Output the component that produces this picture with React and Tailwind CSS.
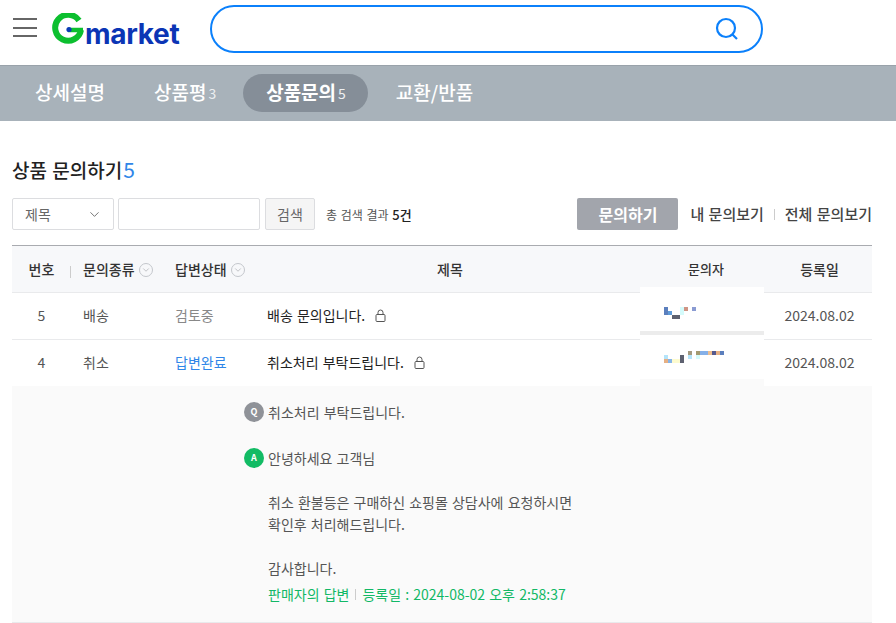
import { ChevronDown } from 'lucide-react';

const FONT = '"Noto Sans CJK KR", "Noto Sans", sans-serif';

// mosaic blocks that hide the author's name, [x, y, w, h, colour]
const MOSAIC_ONE = [
  [0, 0, 4, 8, '#5b7fbd'], [4, 4, 4, 4, '#5f9bd8'], [8, 8, 8, 4, '#5d6170'],
  [16, 0, 4, 8, '#d5fbfb'], [20, 0, 4, 4, '#cf9484'], [28, 0, 4, 4, '#8a9bd2'],
];
const MOSAIC_TWO = [
  [0, 4, 4, 4, '#b4e4fa'], [0, 8, 4, 4, '#e6b084'], [4, 8, 4, 4, '#85b4e8'], [8, 8, 8, 4, '#fdfbcf'],
  [16, 4, 4, 8, '#5d6170'], [24, 0, 4, 4, '#a49a80'], [24, 4, 4, 4, '#b4e4fa'], [32, 0, 4, 4, '#a49a70'],
  [32, 4, 4, 4, '#d5fbfb'], [36, 0, 8, 4, '#85b0e8'], [44, 0, 4, 4, '#efbe8e'], [48, 0, 4, 4, '#55598f'],
  [52, 0, 4, 4, '#e6b084'], [56, 0, 4, 4, '#5b7fbd'],
];

function Mosaic({ blocks }) {
  return (
    <svg width="60" height="12" viewBox="0 0 60 12" shapeRendering="crispEdges" className="block">
      {blocks.map(([x, y, w, h, c], i) => (
        <rect key={i} x={x} y={y} width={w} height={h} fill={c} />
      ))}
    </svg>
  );
}

function Logo() {
  return (
    <div className="flex items-end ml-[15px] h-[34px] w-[130px] mb-[8px]">
      <svg width="33" height="33" viewBox="0 0 33 33" className="shrink-0">
        <path d="M27 7.5A13 13 0 1 0 29 17" fill="none" stroke="#0cbf2f" strokeWidth="6" />
        <path d="M16 17H31" fill="none" stroke="#0cbf2f" strokeWidth="4.5" />
        <circle cx="17" cy="16.5" r="2.6" fill="#0b3bb5" />
      </svg>
      <span className="text-[#0b35b5] text-[28px] leading-[26px] font-bold tracking-[-0.3px] mb-[-1px] font-['Inter']">market</span>
    </div>
  );
}

function Tab({ label, count, active, className }) {
  return (
    <div className={`flex items-center h-[38px] rounded-full text-white ${active ? 'bg-[#858e98] font-bold pl-[23px] pr-[22px]' : 'font-medium'} ${className}`}>
      <span className="text-[19px]">{label}</span>
      {count && <span className="text-[14px] font-normal ml-[2px] mt-[2px] text-[#eef0f2]">{count}</span>}
    </div>
  );
}

function SortIcon() {
  return (
    <span className="inline-flex items-center justify-center w-[14px] h-[14px] rounded-full border border-[#c4c7cc] ml-[4px] mt-[1px]">
      <ChevronDown size={10} strokeWidth={1.2} color="#8a8d93" />
    </span>
  );
}

function LockIcon() {
  return (
    <svg width="11" height="13" viewBox="0 0 11 13" fill="none" stroke="#555" strokeWidth="1" className="ml-[10px]">
      <path d="M3 5.5V3.5a2.5 2.5 0 0 1 5 0v2" />
      <rect x="1" y="5.5" width="9" height="7" rx="1" />
    </svg>
  );
}

function Row({ num, type, status, statusColor, title, mosaic, maskClass }) {
  return (
    <div className="relative flex items-center h-[47px] pb-[2px] border-t border-[#e9eaec] text-[14px] text-[#555]">
      <div className="w-[59px] text-center">{num}</div>
      <div className="w-[92px] pl-[12px]">{type}</div>
      <div className={`w-[92px] pl-[12px] ${statusColor}`}>{status}</div>
      <div className="w-[390px] pl-[12px] flex items-center text-[#222]">
        <span>{title}</span>
        <LockIcon />
      </div>
      <div className="w-[122px]" />
      <div className="w-[105px] text-center text-[#555]">2024.08.02</div>
      <div className={`absolute left-[628px] w-[124px] bg-white pl-[24px] ${maskClass}`}>
        <Mosaic blocks={mosaic} />
      </div>
    </div>
  );
}

export default function App() {
  return (
    <div className="w-[896px] h-[623px] overflow-hidden bg-white [word-spacing:1px]" style={{ fontFamily: FONT }}>
      {/* top bar */}
      <header className="flex items-center h-[65px]">
        <div className="flex flex-col gap-[6.5px] ml-[13px] w-[24px] mb-[10px]">
          <span className="h-[2px] bg-[#666]" />
          <span className="h-[2px] bg-[#666]" />
          <span className="h-[2px] bg-[#666]" />
        </div>
        <Logo />
        <div className="flex items-center justify-end w-[553px] h-[48px] ml-[28px] mb-[8px] pr-[22px] rounded-full border-2 border-[#0b80fb]">
          <svg width="24" height="24" viewBox="0 0 24 24" fill="none" stroke="#0b80fb" strokeWidth="2.2">
            <circle cx="11" cy="11" r="9" />
            <path d="M17.5 17.5L22 22" />
          </svg>
        </div>
      </header>

      {/* tabs */}
      <nav className="flex items-center h-[56px] pb-[2px] bg-[#a8b2ba] border-t border-[#99a2aa]">
        <Tab label="상세설명" className="ml-[35px]" />
        <Tab label="상품평" count="3" className="ml-[49px]" />
        <Tab label="상품문의" count="5" active className="ml-[27px]" />
        <Tab label="교환/반품" className="ml-[28px]" />
      </nav>

      <main className="pl-[12px] pr-[24px]">
        <h2 className="flex items-center h-[26px] mt-[36px] text-[19px] font-medium text-[#222]">
          상품 문의하기<span className="text-[#2f86e8] font-normal text-[21px] ml-[1px]">5</span>
        </h2>

        {/* search + action row */}
        <div className="flex items-center h-[32px] mt-[15px]">
          <div className="flex items-center justify-between w-[102px] h-[32px] pl-[12px] pr-[11px] border border-[#dcdde0] rounded-[2px] text-[14px] text-[#666]">
            제목
            <ChevronDown size={15} strokeWidth={1.3} color="#555" />
          </div>
          <div className="w-[142px] h-[32px] ml-[4px] border border-[#dcdde0] rounded-[2px]" />
          <div className="flex items-center justify-center w-[50px] h-[32px] ml-[5px] bg-[#f5f5f5] border border-[#dcdde0] rounded-[2px] text-[14px] text-[#666]">검색</div>
          <div className="ml-[11px] text-[12px] text-[#555] pt-[1px]">
            총 검색 결과 <span className="font-medium text-[#222] text-[13px]">5건</span>
          </div>
          <div className="flex items-center justify-center w-[101px] h-[32px] ml-auto bg-[#a2a5ac] rounded-[2px] text-white font-bold text-[16px]">문의하기</div>
          <span className="ml-[12px] text-[15px] text-[#444] font-medium">내 문의보기</span>
          <span className="w-px h-[11px] bg-[#ccc] mx-[10px]" />
          <span className="text-[15px] text-[#444] font-medium">전체 문의보기</span>
        </div>

        {/* table */}
        <div className="mt-[15px] border-t border-[#a9abb0]">
          <div className="flex items-center h-[46px] bg-[#f7f8fa] text-[14px] font-medium text-[#333]">
            <div className="relative w-[59px] text-center">
              번호
              <span className="absolute right-0 top-[7px] w-px h-[12px] bg-[#ccc]" />
            </div>
            <div className="w-[92px] pl-[12px] flex items-center">문의종류<SortIcon /></div>
            <div className="w-[92px] pl-[12px] flex items-center">답변상태<SortIcon /></div>
            <div className="w-[390px] text-center">제목</div>
            <div className="w-[122px] text-center text-[13px]">문의자</div>
            <div className="w-[105px] text-center">등록일</div>
          </div>

          <Row num="5" type="배송" status="검토중" statusColor="text-[#888]" title="배송 문의입니다." mosaic={MOSAIC_ONE} maskClass="top-[-6px] h-[48px] pt-[20px] border-b-4 border-[#ececec]" />
          <Row num="4" type="취소" status="답변완료" statusColor="text-[#2f86e8]" title="취소처리 부탁드립니다." mosaic={MOSAIC_TWO} maskClass="top-[-5px] h-[51px] pt-[16px] border-b-7 border-[#fafafa]" />

          {/* opened answer */}
          <div className="h-[237px] bg-[#fafafa] border-b border-[#e9eaec] pl-[232px] pt-[15px] text-[14px] text-[#555]">
            <div className="flex items-center h-[22px]">
              <span className="flex items-center justify-center w-[20px] h-[20px] rounded-full bg-[#8f9298] text-white text-[9px] font-bold mr-[4px]">Q</span>
              취소처리 부탁드립니다.
            </div>
            <div className="flex items-center h-[22px] mt-[24px]">
              <span className="flex items-center justify-center w-[20px] h-[20px] rounded-full bg-[#12bb64] text-white text-[9px] font-bold mr-[4px]">A</span>
              안녕하세요 고객님
            </div>
            <div className="pl-[24px] leading-[22px] mt-[22px]">
              <p>취소 환불등은 구매하신 쇼핑몰 상담사에 요청하시면</p>
              <p>확인후 처리해드립니다.</p>
              <p className="mt-[22px]">감사합니다.</p>
            </div>
            <div className="flex items-center pl-[24px] mt-[4px] leading-[22px] text-[#12b866]">
              판매자의 답변
              <span className="w-px h-[11px] bg-[#ccc] mx-[6px]" />
              등록일 : 2024-08-02 오후 2:58:37
            </div>
          </div>
        </div>
      </main>
    </div>
  );
}
